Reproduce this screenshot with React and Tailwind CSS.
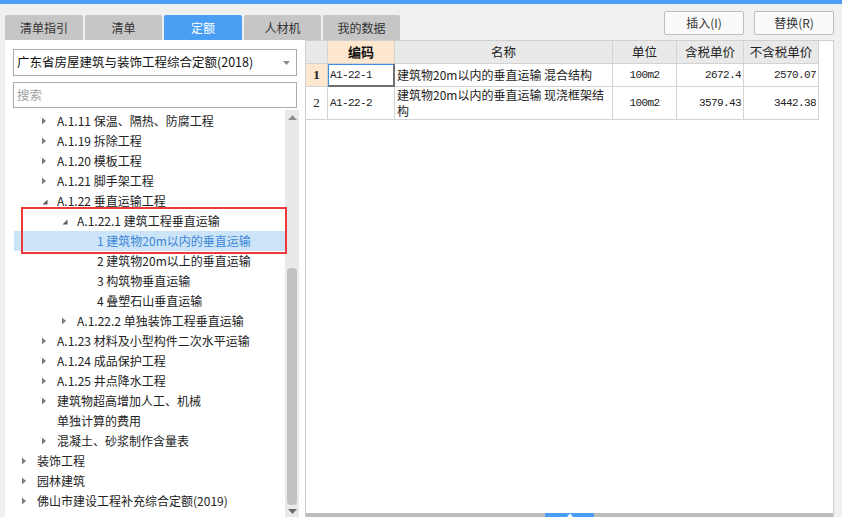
import React from "react";

const tree = [
  { lvl: 2, a: "c", t: "A.1.11 保温、隔热、防腐工程" },
  { lvl: 2, a: "c", t: "A.1.19 拆除工程" },
  { lvl: 2, a: "c", t: "A.1.20 模板工程" },
  { lvl: 2, a: "c", t: "A.1.21 脚手架工程" },
  { lvl: 2, a: "e", t: "A.1.22 垂直运输工程" },
  { lvl: 3, a: "e", t: "A.1.22.1 建筑工程垂直运输" },
  { lvl: 4, a: "n", t: "1 建筑物20m以内的垂直运输", sel: true },
  { lvl: 4, a: "n", t: "2 建筑物20m以上的垂直运输" },
  { lvl: 4, a: "n", t: "3 构筑物垂直运输" },
  { lvl: 4, a: "n", t: "4 叠塑石山垂直运输" },
  { lvl: 3, a: "c", t: "A.1.22.2 单独装饰工程垂直运输" },
  { lvl: 2, a: "c", t: "A.1.23 材料及小型构件二次水平运输" },
  { lvl: 2, a: "c", t: "A.1.24 成品保护工程" },
  { lvl: 2, a: "c", t: "A.1.25 井点降水工程" },
  { lvl: 2, a: "c", t: "建筑物超高增加人工、机械" },
  { lvl: 2, a: "n", t: "单独计算的费用" },
  { lvl: 2, a: "c", t: "混凝土、砂浆制作含量表" },
  { lvl: 1, a: "c", t: "装饰工程" },
  { lvl: 1, a: "c", t: "园林建筑" },
  { lvl: 1, a: "c", t: "佛山市建设工程补充综合定额(2019)" },
];

const padByLvl = {
  1: "pl-[8px]",
  2: "pl-[28px]",
  3: "pl-[48px]",
  4: "pl-[68px]",
};

function Arrow({ a }) {
  if (a === "c")
    return (
      <svg width="5" height="8" viewBox="0 0 5 8">
        <polygon points="0,0.5 4,4 0,7.5" fill="#7d7d7d" />
      </svg>
    );
  if (a === "e")
    return (
      <svg width="6" height="6" viewBox="0 0 6 6" className="mt-[2px]">
        <polygon points="5.5,0.5 5.5,5.5 0.5,5.5" fill="#595959" />
      </svg>
    );
  return null;
}

const tabs = ["清单指引", "清单", "定额", "人材机", "我的数据"];
const tabW = ["w-[78px]", "w-[77px]", "w-[78px]", "w-[77px]", "w-[77px]"];

const cjk = { fontFamily: '"Noto Sans CJK SC", "Microsoft YaHei", sans-serif' };
const mono = "font-['Liberation_Mono',monospace] text-[11px] tracking-[-0.6px]";

export default function App() {
  return (
    <div
      className="w-[842px] h-[517px] bg-[#f0f0f0] flex flex-col overflow-hidden text-[12px] text-[#222]"
      style={cjk}
    >
      <div className="h-[4px] bg-[#4a9df3]" />
      {/* header */}
      <div className="h-[36px] flex">
        <div className="flex items-end pl-[5px] gap-[2px]">
          {tabs.map((t, i) => (
            <div
              key={t}
              className={`${tabW[i]} h-[25px] rounded-t-[2px] flex items-center justify-center text-[12px] ${
                i === 2 ? "bg-[#4a9ff5] text-white" : "bg-[#c6c6c6] text-[#333]"
              }`}
            >
              {t}
            </div>
          ))}
        </div>
        <div className="flex-1" />
        <div className="flex gap-[10px] pt-[7px] pr-[8px]">
          <div className="w-[80px] h-[24px] border border-[#bdbdbd] rounded-[2px] bg-[#fafafa] flex items-center justify-center text-[12px] text-[#333]">
            插入(I)
          </div>
          <div className="w-[80px] h-[24px] border border-[#bdbdbd] rounded-[2px] bg-[#fafafa] flex items-center justify-center text-[12px] text-[#333]">
            替换(R)
          </div>
        </div>
      </div>
      {/* main */}
      <div className="flex-1 flex min-h-0">
        {/* left panel */}
        <div className="ml-[5px] w-[300px] bg-white flex flex-col min-h-0">
          <div className="mt-[9px] mx-[8px] h-[27px] border border-[#ababab] flex items-center pl-[3px] pr-[6px]">
            <span className="flex-1 text-[12.5px] text-[#111]">广东省房屋建筑与装饰工程综合定额(2018)</span>
            <svg width="7" height="4" viewBox="0 0 7 4">
              <polygon points="0,0 7,0 3.5,4" fill="#8a8a8a" />
            </svg>
          </div>
          <div className="mt-[6px] mx-[8px] h-[26px] border border-[#ababab] flex items-center pl-[3px] text-[12.5px] text-[#a0a0a0]">
            搜索
          </div>
          <div className="mt-[2px] flex-1 flex min-h-0">
            <div className="relative z-10 w-[271px] ml-[9px] pt-[1px]">
              {tree.map((r, i) => (
                <div
                  key={i}
                  className={`h-[20px] flex items-center ${padByLvl[r.lvl]} ${
                    r.sel ? "bg-[#cce4f7] text-[#3a86d8]" : ""
                  }`}
                >
                  <div className="w-[15px] flex items-center">
                    <Arrow a={r.a} />
                  </div>
                  <span className="whitespace-nowrap">{r.t}</span>
                </div>
              ))}
              <div className="absolute left-[7px] top-[97px] w-[266px] h-[47px] border-2 border-[#ec3a3a]" />
            </div>
            <div className="w-[14px] bg-[#e9e9e9] flex flex-col items-center">
              <div className="h-[14px] flex items-center justify-center">
                <svg width="9" height="5" viewBox="0 0 9 5">
                  <polygon points="0,5 9,5 4.5,0" fill="#8d8d8d" />
                </svg>
              </div>
              <div className="h-[144px]" />
              <div className="w-[10px] flex-1 bg-[#c2c2c2] rounded-[4px]" />
              <div className="h-[12px] flex items-center justify-center">
                <svg width="9" height="5" viewBox="0 0 9 5">
                  <polygon points="0,0 9,0 4.5,5" fill="#6a6a6a" />
                </svg>
              </div>
            </div>
            <div className="w-[6px]" />
          </div>
        </div>
        {/* table panel */}
        <div className="w-[529px] bg-white border-l border-r border-t border-[#cfcfcf] flex flex-col min-h-0">
          <div className="flex-1">
            <div className="grid grid-cols-[22px_67px_218px_64px_67px_75px] w-[513px]">
              {/* header */}
              <div className="h-[23px] bg-[#e9e9e9] border-r border-b border-[#d3d3d3]" />
              <div className="h-[23px] bg-[#fde8cf] border-r border-b border-[#d3d3d3] flex items-center justify-center font-bold text-[13px] text-[#111]">
                编码
              </div>
              <div className="h-[23px] bg-[#e9e9e9] border-r border-b border-[#d3d3d3] flex items-center justify-center text-[12.5px]">
                名称
              </div>
              <div className="h-[23px] bg-[#e9e9e9] border-r border-b border-[#d3d3d3] flex items-center justify-center text-[12.5px]">
                单位
              </div>
              <div className="h-[23px] bg-[#e9e9e9] border-r border-b border-[#d3d3d3] flex items-center justify-center text-[12.5px]">
                含税单价
              </div>
              <div className="h-[23px] bg-[#e9e9e9] border-r border-b border-[#d3d3d3] flex items-center justify-center text-[12.5px]">
                不含税单价
              </div>
              {/* row 1 */}
              <div className="h-[23px] bg-[#fde8cf] border-r border-b border-[#d3d3d3] flex items-center justify-center font-bold text-[13px] font-['Liberation_Serif',serif]">
                1
              </div>
              <div className="h-[23px] border-t border-l border-t-[#3d8ee8] border-l-[#3d8ee8] border-r-2 border-b-2 border-r-[#6e6e6e] border-b-[#6e6e6e] flex items-center pl-[1px]">
                <span className={mono}>A1-22-1</span>
              </div>
              <div className="h-[23px] border-r border-b border-[#d3d3d3] flex items-center pl-[2px] whitespace-nowrap">
                建筑物20m以内的垂直运输 混合结构
              </div>
              <div className="h-[23px] border-r border-b border-[#d3d3d3] flex items-center justify-center">
                <span className={mono}>100m2</span>
              </div>
              <div className="h-[23px] border-r border-b border-[#d3d3d3] flex items-center justify-end pr-[2px]">
                <span className={mono}>2672.4</span>
              </div>
              <div className="h-[23px] border-r border-b border-[#d3d3d3] flex items-center justify-end pr-[2px]">
                <span className={mono}>2570.07</span>
              </div>
              {/* row 2 */}
              <div className="h-[33px] border-r border-b border-[#d3d3d3] flex items-center justify-center text-[13px] font-['Liberation_Serif',serif]">
                2
              </div>
              <div className="h-[33px] border-r border-b border-[#d3d3d3] flex items-center pl-[2px]">
                <span className={mono}>A1-22-2</span>
              </div>
              <div className="h-[33px] border-r border-b border-[#d3d3d3] flex flex-col justify-start pl-[2px] leading-[16px]">
                <span className="whitespace-nowrap">建筑物20m以内的垂直运输 现浇框架结</span>
                <span>构</span>
              </div>
              <div className="h-[33px] border-r border-b border-[#d3d3d3] flex items-center justify-center">
                <span className={mono}>100m2</span>
              </div>
              <div className="h-[33px] border-r border-b border-[#d3d3d3] flex items-center justify-end pr-[2px]">
                <span className={mono}>3579.43</span>
              </div>
              <div className="h-[33px] border-r border-b border-[#d3d3d3] flex items-center justify-end pr-[2px]">
                <span className={mono}>3442.38</span>
              </div>
            </div>
          </div>
          <div className="h-[4px] flex bg-[#bdbdbd]">
            <div className="w-[239px]" />
            <div className="w-[49px] bg-[#4a9ff5] flex justify-center">
              <svg width="6" height="4" viewBox="0 0 6 4">
                <polygon points="0,4 6,4 3,0.5" fill="#ffffff" />
              </svg>
            </div>
          </div>
        </div>
      </div>
    </div>
  );
}
